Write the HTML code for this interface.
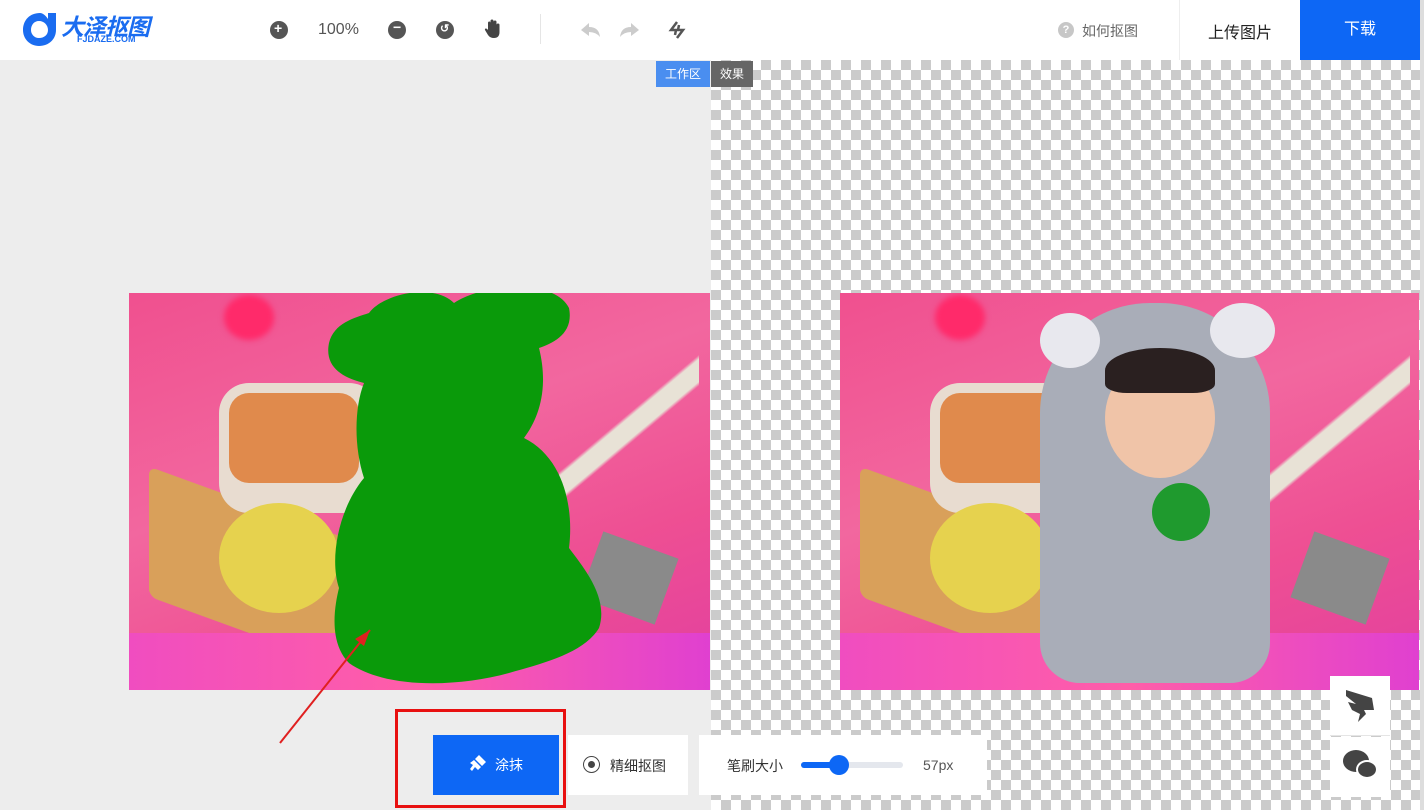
<!DOCTYPE html>
<html><head><meta charset="utf-8"><style>
*{margin:0;padding:0;box-sizing:border-box}
body{width:1424px;height:810px;overflow:hidden;font-family:"Liberation Sans","Noto Sans CJK SC",sans-serif;background:#ededed;position:relative}
.top{position:absolute;left:0;top:0;width:1424px;height:60px;background:#fff}
.abs{position:absolute}
.chk{position:absolute;left:711px;top:60px;width:713px;height:750px;background-color:#fff;background-image:linear-gradient(45deg,#cbcbcb 25%,transparent 25%,transparent 75%,#cbcbcb 75%),linear-gradient(45deg,#cbcbcb 25%,transparent 25%,transparent 75%,#cbcbcb 75%);background-size:20px 20px;background-position:0 0,10px 10px}
.img{position:absolute;top:293px;height:397px;background:linear-gradient(160deg,#f0508f 0%,#f2679f 40%,#ee4f93 70%,#e23fa0 100%);overflow:hidden}
.ic{position:absolute;width:18px;height:18px;border-radius:50%;background:#555}
</style></head><body>
<div class="top"></div>
<svg class="abs" style="left:20px;top:9px" width="40" height="40" viewBox="0 0 40 40"><path d="M20 4 C10 4 3 11 3 21 C3 30 10 37 19 37 C29 37 36 30 36 21 L36 4 L28 4 L28 10 C26 7 23 4 20 4 Z M19 12 C24 12 28 16 28 21 C28 26 24 29 19 29 C14 29 11 25 11 21 C11 16 14 12 19 12 Z" fill="#1a6cf0"/></svg>
<div class="abs" style="left:61px;top:8px;font-size:23px;font-weight:bold;font-style:italic;color:#1a6cf0;letter-spacing:-1px">大泽抠图</div>
<div class="abs" style="left:77px;top:34px;font-size:9px;font-weight:bold;color:#1a6cf0">FJDAZE.COM</div>
<div class="ic" style="left:270px;top:21px"></div><div class="abs" style="left:274px;top:20px;color:#fff;font-size:14px;font-weight:bold">+</div>
<div class="abs" style="left:318px;top:21px;font-size:16px;color:#555">100%</div>
<div class="ic" style="left:388px;top:21px"></div><div class="abs" style="left:393px;top:19px;color:#fff;font-size:14px;font-weight:bold">−</div>
<div class="ic" style="left:436px;top:21px"></div><div class="abs" style="left:440px;top:22px;color:#fff;font-size:11px;font-weight:bold">↺</div>
<svg class="abs" style="left:484px;top:19px" width="18" height="20" viewBox="0 0 18 20"><path d="M4 11 L4 4 Q4 2.5 5.3 2.5 Q6.5 2.5 6.5 4 L6.5 9 L6.5 2 Q6.5 0.5 8 0.5 Q9.5 0.5 9.5 2 L9.5 9 L9.5 3 Q9.5 1.5 11 1.5 Q12.5 1.5 12.5 3 L12.5 10 L12.5 6 Q12.5 4.5 14 4.5 Q15.5 4.5 15.5 6 L15.5 13 Q15.5 19 10 19 Q6 19 4 16 L1 11 Q0.5 9.5 2 9.5 Q3 9.5 4 11 Z" fill="#444"/></svg>
<div class="abs" style="left:540px;top:14px;width:1px;height:30px;background:#e5e5e5"></div>
<svg class="abs" style="left:581px;top:22px" width="20" height="16"><path d="M0 8 L8 1 L8 5 Q18 5 19 15 Q15 10 8 10 L8 14 Z" fill="#ccc"/></svg>
<svg class="abs" style="left:619px;top:22px" width="20" height="16"><path d="M20 8 L12 1 L12 5 Q2 5 1 15 Q5 10 12 10 L12 14 Z" fill="#ccc"/></svg>
<svg class="abs" style="left:668px;top:21px" width="18" height="18"><path d="M9 1 L3 9 L8 9 L7 14 M9 17 L15 9 L10 9 L11 4" stroke="#555" stroke-width="2.5" fill="none"/></svg>
<div class="abs" style="left:1058px;top:22px;width:16px;height:16px;border-radius:50%;background:#c7c7c7;color:#fff;font-size:11px;text-align:center;line-height:16px;font-weight:bold">?</div>
<div class="abs" style="left:1082px;top:21px;font-size:14px;color:#666">如何抠图</div>
<div class="abs" style="left:1179px;top:0;width:1px;height:60px;background:#eee"></div>
<div class="abs" style="left:1208px;top:19px;font-size:16px;color:#222">上传图片</div>
<div class="abs" style="left:1300px;top:0;width:120px;height:60px;background:#0d67f5;color:#fff;font-size:16px;text-align:center;line-height:60px">下载</div>
<div class="chk"></div>
<div class="abs" style="left:1420px;top:0;width:4px;height:810px;background:#ddd"></div>
<div class="abs" style="left:656px;top:61px;width:54px;height:26px;background:#4a8ef0;color:#fff;font-size:12px;text-align:center;line-height:26px">工作区</div>
<div class="abs" style="left:711px;top:61px;width:42px;height:26px;background:#666;color:#fff;font-size:12px;text-align:center;line-height:26px">效果</div>
<div class="img" style="left:129px;width:581px">
<div class="abs" style="left:95px;top:2px;width:50px;height:45px;border-radius:50%;background:#ff2a6a;filter:blur(3px)"></div>
<div class="abs" style="left:20px;top:210px;width:200px;height:130px;background:#d9a05a;transform:skewY(20deg);border-radius:8px"></div>
<div class="abs" style="left:90px;top:90px;width:160px;height:130px;background:#e8dcd0;border-radius:30px"></div>
<div class="abs" style="left:100px;top:100px;width:130px;height:90px;background:#e08a4c;border-radius:20px"></div>
<div class="abs" style="left:90px;top:210px;width:120px;height:110px;background:#e6d24e;border-radius:50%"></div>
<div class="abs" style="left:430px;top:0;width:140px;height:330px;background:linear-gradient(140deg,transparent 40%,#e8e2d6 41%,#e8e2d6 46%,transparent 47%)"></div>
<div class="abs" style="left:460px;top:250px;width:80px;height:70px;background:#8a8a8a;transform:rotate(20deg)"></div>
<div class="abs" style="left:0;top:340px;width:581px;height:60px;background:linear-gradient(90deg,#f04dc0,#ff5ea8,#e040d0)"></div>
<svg class="abs" style="left:195px;top:-5px" width="290" height="405" viewBox="0 0 290 405"><path d="M45 25 C60 5 110 -5 130 15 C160 -5 230 -10 245 20 C250 45 230 55 215 60 C225 100 215 130 200 150 C240 170 250 220 245 260 C260 280 285 310 275 340 C260 365 220 375 185 385 C130 400 60 400 25 375 C5 355 10 320 15 300 C5 270 15 220 40 190 C30 160 30 120 40 95 C20 90 0 80 5 55 C10 35 30 30 45 25 Z" fill="#0a9a0a"/></svg>
</div>
<div class="img" style="left:840px;width:579px">
<div class="abs" style="left:95px;top:2px;width:50px;height:45px;border-radius:50%;background:#ff2a6a;filter:blur(3px)"></div>
<div class="abs" style="left:20px;top:210px;width:200px;height:130px;background:#d9a05a;transform:skewY(20deg);border-radius:8px"></div>
<div class="abs" style="left:90px;top:90px;width:160px;height:130px;background:#e8dcd0;border-radius:30px"></div>
<div class="abs" style="left:100px;top:100px;width:130px;height:90px;background:#e08a4c;border-radius:20px"></div>
<div class="abs" style="left:90px;top:210px;width:120px;height:110px;background:#e6d24e;border-radius:50%"></div>
<div class="abs" style="left:430px;top:0;width:140px;height:330px;background:linear-gradient(140deg,transparent 40%,#e8e2d6 41%,#e8e2d6 46%,transparent 47%)"></div>
<div class="abs" style="left:460px;top:250px;width:80px;height:70px;background:#8a8a8a;transform:rotate(20deg)"></div>
<div class="abs" style="left:0;top:340px;width:579px;height:60px;background:linear-gradient(90deg,#f04dc0,#ff5ea8,#e040d0)"></div>
<div class="abs" style="left:200px;top:10px;width:230px;height:380px;background:#a9adb8;border-radius:110px 110px 40px 40px"></div>
<div class="abs" style="left:200px;top:20px;width:60px;height:55px;background:#e8e8ee;border-radius:50%"></div>
<div class="abs" style="left:370px;top:10px;width:65px;height:55px;background:#e8e8ee;border-radius:50%"></div>
<div class="abs" style="left:265px;top:65px;width:110px;height:120px;background:#f0c4a8;border-radius:50%"></div>
<div class="abs" style="left:265px;top:55px;width:110px;height:45px;background:#2a2020;border-radius:50% 50% 20% 20%"></div>
<div class="abs" style="left:312px;top:190px;width:58px;height:58px;background:#1f9a2e;border-radius:50%"></div>
</div>
<svg class="abs" style="left:275px;top:625px" width="100" height="125"><line x1="5" y1="118" x2="95" y2="5" stroke="#e02020" stroke-width="2"/><path d="M95 5 L80 14 L89 21 Z" fill="#e02020"/></svg>
<div class="abs" style="left:395px;top:709px;width:171px;height:99px;border:3px solid #e81010"></div>
<div class="abs" style="left:433px;top:735px;width:126px;height:60px;background:#0d67f5;color:#fff;font-size:14px;line-height:60px;padding-left:62px">涂抹</div>
<svg class="abs" style="left:469px;top:754px" width="18" height="18" viewBox="0 0 18 18"><path d="M10 1 L17 8 L13 12 L6 5 Z M5 6 L12 13 L9 16 L6 13 L3 17 L1 15 L4 11 L1 9 Z" fill="#fff"/></svg>
<div class="abs" style="left:568px;top:735px;width:120px;height:60px;background:#fff"></div>
<div class="abs" style="left:583px;top:756px;width:17px;height:17px;border:1.5px solid #444;border-radius:50%"></div>
<div class="abs" style="left:588px;top:761px;width:7px;height:7px;background:#444;border-radius:50%"></div>
<div class="abs" style="left:610px;top:756px;font-size:14px;color:#333">精细抠图</div>
<div class="abs" style="left:699px;top:735px;width:288px;height:60px;background:#fff"></div>
<div class="abs" style="left:727px;top:756px;font-size:14px;color:#333">笔刷大小</div>
<div class="abs" style="left:801px;top:762px;width:102px;height:6px;border-radius:3px;background:#e4e7ed"></div>
<div class="abs" style="left:801px;top:762px;width:38px;height:6px;border-radius:3px;background:#0d67f5"></div>
<div class="abs" style="left:829px;top:755px;width:20px;height:20px;border-radius:50%;background:#0d67f5"></div>
<div class="abs" style="left:923px;top:757px;font-size:14px;color:#555">57px</div>
<div class="abs" style="left:1330px;top:676px;width:60px;height:60px;background:#fff;border-bottom:1px solid #e5e5e5"></div>
<svg class="abs" style="left:1344px;top:688px" width="32" height="36" viewBox="0 0 32 36"><path d="M2 2 L28 10 L30 22 L20 22 L22 26 L14 34 L16 26 L8 22 L4 14 L12 16 L2 8 Z" fill="#444"/></svg>
<div class="abs" style="left:1330px;top:737px;width:60px;height:60px;background:#fff"></div>
<div class="abs" style="left:1343px;top:750px;width:26px;height:22px;border-radius:50%;background:#444"></div>
<div class="abs" style="left:1356px;top:760px;width:22px;height:19px;border-radius:50%;background:#444;border:2px solid #fff"></div>
</body></html>
